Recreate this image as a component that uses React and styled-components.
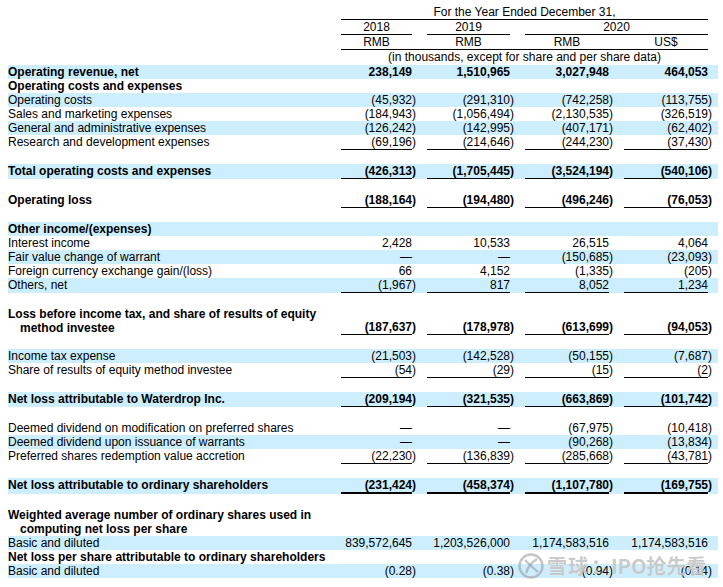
import React from 'react';
import styled, { createGlobalStyle } from 'styled-components';

const GlobalStyle = createGlobalStyle`
  html, body { margin: 0; padding: 0; background: #fff; }
  body { font-family: "Liberation Sans", Arial, sans-serif; color: #000; }
`;

// label | n1 | p1 | n2 | p2 | n3 | p3 | n4 | p4
const COLS = '333px 71px 15px 83px 15px 84px 15px 84px 9px';

const Page = styled.div`
  position: relative;
  width: 723px;
  height: 587px;
  padding: 5px 0 0 8px;
  box-sizing: border-box;
  overflow: hidden;
`;

const Table = styled.div`
  width: 710px;
  font-size: 12px;
  line-height: 14px;
`;

const Row = styled.div`
  display: grid;
  grid-template-columns: ${COLS};
  background: ${(p) => (p.$shade ? '#cceeff' : 'transparent')};
  font-weight: ${(p) => (p.$bold ? 700 : 400)};
`;

const Spacer = styled.div`
  height: 14px;
`;

const HeadCell = styled.div`
  grid-column: ${(p) => p.$col};
  text-align: center;
  border-bottom: ${(p) => (p.$line ? '1px solid #000' : '1px solid transparent')};
`;

const Label = styled.div`
  padding-left: ${(p) => (p.$hang ? '12px' : '0')};
  text-indent: ${(p) => (p.$hang ? '-12px' : '0')};
  white-space: nowrap;
`;

const lineStyle = (line, color) =>
  line === 'double' ? `2px solid ${color}` : line ? `1px solid ${color}` : 'none';

const Num = styled.div`
  text-align: right;
  align-self: end;
  white-space: nowrap;
  border-bottom: ${(p) => lineStyle(p.$line, '#000')};
`;

const Paren = styled.div`
  align-self: end;
  border-bottom: ${(p) => lineStyle(p.$line, 'transparent')};
`;

const Watermark = styled.div`
  position: absolute;
  left: 517px;
  top: 553px;
  display: flex;
  align-items: center;
  gap: 2px;
  color: rgba(150, 150, 150, 0.5);
  font-family: "Noto Sans CJK SC", "Liberation Sans", sans-serif;
  font-size: 20px;
  font-weight: 700;
  line-height: 24px;
  text-shadow: 0 0 1px rgba(255, 255, 255, 0.9);
  pointer-events: none;
`;

const WmText = styled.span`
  letter-spacing: ${(p) => p.$spacing || '0'};
`;

const rows = [
  { label: 'Operating revenue, net', bold: true, shade: true, values: ['238,149', '1,510,965', '3,027,948', '464,053'] },
  { label: 'Operating costs and expenses', bold: true },
  { label: 'Operating costs', shade: true, values: ['(45,932)', '(291,310)', '(742,258)', '(113,755)'] },
  { label: 'Sales and marketing expenses', values: ['(184,943)', '(1,056,494)', '(2,130,535)', '(326,519)'] },
  { label: 'General and administrative expenses', shade: true, values: ['(126,242)', '(142,995)', '(407,171)', '(62,402)'] },
  { label: 'Research and development expenses', line: 'single', values: ['(69,196)', '(214,646)', '(244,230)', '(37,430)'] },
  { gap: true },
  { label: 'Total operating costs and expenses', bold: true, shade: true, line: 'single', values: ['(426,313)', '(1,705,445)', '(3,524,194)', '(540,106)'] },
  { gap: true },
  { label: 'Operating loss', bold: true, line: 'single', values: ['(188,164)', '(194,480)', '(496,246)', '(76,053)'] },
  { gap: true },
  { label: 'Other income/(expenses)', bold: true, shade: true },
  { label: 'Interest income', values: ['2,428', '10,533', '26,515', '4,064'] },
  { label: 'Fair value change of warrant', shade: true, values: ['—', '—', '(150,685)', '(23,093)'] },
  { label: 'Foreign currency exchange gain/(loss)', values: ['66', '4,152', '(1,335)', '(205)'] },
  { label: 'Others, net', shade: true, line: 'single', values: ['(1,967)', '817', '8,052', '1,234'] },
  { gap: true },
  { label: ['Loss before income tax, and share of results of equity', 'method investee'], bold: true, line: 'single', values: ['(187,637)', '(178,978)', '(613,699)', '(94,053)'] },
  { gap: true },
  { label: 'Income tax expense', shade: true, values: ['(21,503)', '(142,528)', '(50,155)', '(7,687)'] },
  { label: 'Share of results of equity method investee', line: 'single', values: ['(54)', '(29)', '(15)', '(2)'] },
  { gap: true },
  { label: 'Net loss attributable to Waterdrop Inc.', bold: true, shade: true, line: 'single', values: ['(209,194)', '(321,535)', '(663,869)', '(101,742)'] },
  { gap: true },
  { label: 'Deemed dividend on modification on preferred shares', values: ['—', '—', '(67,975)', '(10,418)'] },
  { label: 'Deemed dividend upon issuance of warrants', shade: true, values: ['—', '—', '(90,268)', '(13,834)'] },
  { label: 'Preferred shares redemption value accretion', line: 'single', values: ['(22,230)', '(136,839)', '(285,668)', '(43,781)'] },
  { gap: true },
  { label: 'Net loss attributable to ordinary shareholders', bold: true, shade: true, line: 'double', values: ['(231,424)', '(458,374)', '(1,107,780)', '(169,755)'] },
  { gap: true },
  { label: ['Weighted average number of ordinary shares used in', 'computing net loss per share'], bold: true },
  { label: 'Basic and diluted', shade: true, values: ['839,572,645', '1,203,526,000', '1,174,583,516', '1,174,583,516'] },
  { label: 'Net loss per share attributable to ordinary shareholders', bold: true },
  { label: 'Basic and diluted', shade: true, values: ['(0.28)', '(0.38)', '(0.94)', '(0.14)'] },
];

const splitValue = (v) => (v.endsWith(')') ? [v.slice(0, -1), ')'] : [v, '']);

const DataRow = ({ row }) => {
  const multi = Array.isArray(row.label);
  return (
    <Row $shade={row.shade} $bold={row.bold}>
      <Label $hang={multi}>
        {multi ? (
          <>
            {row.label[0]}
            <br />
            {row.label[1]}
          </>
        ) : (
          row.label
        )}
      </Label>
      {(row.values || ['', '', '', '']).map((v, i) => {
        const [num, paren] = splitValue(v);
        return (
          <React.Fragment key={i}>
            <Num $line={row.line}>{num}</Num>
            <Paren $line={row.line}>{paren}</Paren>
          </React.Fragment>
        );
      })}
    </Row>
  );
};

const XueqiuLogo = () => (
  <svg width="28" height="26" viewBox="0 0 28 26" fill="none" stroke="rgba(150,150,150,0.55)" strokeWidth="2.4">
    <circle cx="14" cy="13" r="11.5" />
    <path d="M8 7 C12 11 16 15 21 19" />
    <path d="M20 6 C15 9 11 14 9 20" />
  </svg>
);

const App = () => (
  <Page>
    <GlobalStyle />
    <Table>
      <Row>
        <HeadCell $col="2 / 9" $line>For the Year Ended December 31,</HeadCell>
      </Row>
      <Row>
        <HeadCell $col="2" $line>2018</HeadCell>
        <HeadCell $col="4" $line>2019</HeadCell>
        <HeadCell $col="6 / 9" $line>2020</HeadCell>
      </Row>
      <Row>
        <HeadCell $col="2" $line>RMB</HeadCell>
        <HeadCell $col="3" $line />
        <HeadCell $col="4" $line>RMB</HeadCell>
        <HeadCell $col="5" $line />
        <HeadCell $col="6" $line>RMB</HeadCell>
        <HeadCell $col="7" $line />
        <HeadCell $col="8" $line>US$</HeadCell>
      </Row>
      <Row>
        <HeadCell $col="2 / 9">(in thousands, except for share and per share data)</HeadCell>
      </Row>
      {rows.map((row, i) => (row.gap ? <Spacer key={i} /> : <DataRow key={i} row={row} />))}
    </Table>
    <Watermark>
      <XueqiuLogo />
      <WmText $spacing="1px">雪球</WmText>
      <WmText>：IPO抢先看</WmText>
    </Watermark>
  </Page>
);

export default App;
